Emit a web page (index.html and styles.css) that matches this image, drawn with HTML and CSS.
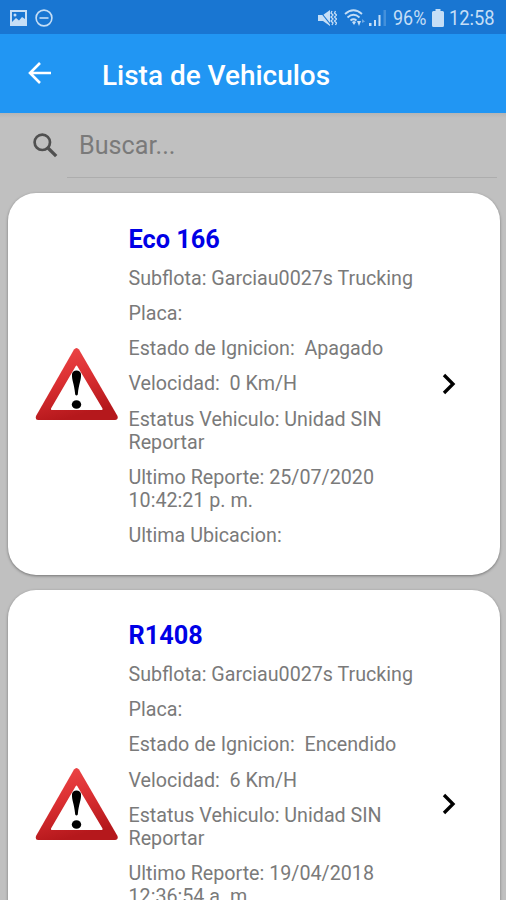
FILE: index.html
```html
<!DOCTYPE html>
<html lang="es">
<head>
<meta charset="utf-8">
<title>Lista de Vehiculos</title>
<link rel="stylesheet" href="styles.css">
</head>
<body>
<svg class="defs" width="0" height="0" aria-hidden="true">
  <defs>
    <linearGradient id="red" x1="0" y1="0" x2="0.3" y2="1">
      <stop offset="0" stop-color="#ef4a4a"/>
      <stop offset="0.5" stop-color="#dc3033"/>
      <stop offset="1" stop-color="#b5181c"/>
    </linearGradient>
    <symbol id="warning" viewBox="0 0 84 74">
      <path d="M39 2.500Q41.500 -0.500 44 2.500L82.500 69Q83.500 73 80 73H3Q0 73 1 69Z" fill="url(#red)"/>
      <path d="M40.500 19.500Q41.500 17.500 42.500 19.500L67.500 61.500Q68 63 66.500 63H17Q15.500 63 16 61.500Z" fill="#fff"/>
      <path d="M37 27Q37.700 23.500 41.500 23.500T46 27C46.300 34 43.800 36 42.800 47.500Q41.500 49.500 40.200 47.500C39.200 36 36.700 34 37 27Z" fill="#000"/>
      <ellipse cx="41.500" cy="57.500" rx="4.700" ry="4.300" fill="#000"/>
    </symbol>
    <symbol id="chevron" viewBox="0 0 14 22">
      <path d="M2 2L11 11L2 20" fill="none" stroke="#000" stroke-width="3.300"/>
    </symbol>
  </defs>
</svg>
<div class="status">
  <svg class="picture" width="17" height="16" viewBox="0 0 17 16"><path fill-rule="evenodd" d="M0 0H17V16H0ZM2 2V12L6 8L9 10.500L12 7L15 9V2Z"/><circle cx="5" cy="5" r="1.500"/></svg>
  <svg class="dnd" width="18" height="18" viewBox="0 0 18 18"><circle cx="9" cy="9" r="7.900" fill="none" stroke="#c5def6" stroke-width="1.600"/><path d="M4.500 8.200H13.500V9.800H4.500Z"/></svg>
  <svg class="mute" width="19" height="18" viewBox="0 0 19 18"><path d="M0 6H5L12 1V17L5 12H0Z"/><path d="M1 1L13 16" stroke="#1976d2" stroke-width="1.200"/><path d="M14 2L13 4L15 6L13 8L15 10L13 12L15 14L14 16M17.500 2L16.500 4L18.500 6L16.500 8L18.500 10L16.500 12L18.500 14L17.500 16" fill="none" stroke="#c5def6" stroke-width="1.300"/></svg>
  <svg class="wifi" width="22" height="18" viewBox="0 0 22 18"><g fill="none" stroke="#c5def6" stroke-width="1.800"><path d="M1 5Q9.500 -2.500 18 5"/><path d="M3.500 8.500Q9.500 3 15.500 8.500"/><path d="M6.500 11.500Q9.500 9 12.500 11.500"/></g><path d="M8 13L10 12L12 13L10 16ZM13 12H17L15 17Z"/><path d="M18 10L21 12.500L18 14Z" opacity=".5"/></svg>
  <svg class="signal" width="18" height="17" viewBox="0 0 18 17"><path d="M0 14H2.500V17H0ZM5 11H7V17H5ZM9.500 6H11.500V17H9.500Z"/><path d="M14.500 1H17V17H14.500Z" opacity=".25"/></svg>
  <span class="percent">96%</span>
  <svg class="battery" width="12" height="18" viewBox="0 0 12 18"><path d="M3.500 0H8.500V2H10.500Q12 2 12 3.500V16.500Q12 18 10.500 18H1.500Q0 18 0 16.500V3.500Q0 2 1.500 2H3.500Z"/></svg>
  <span class="clock">12:58</span>
</div>
<header class="bar">
  <svg class="back" width="24" height="22" viewBox="0 0 24 22"><path d="M12 1L2 11L12 21M2 11H23" fill="none" stroke="#fff" stroke-width="2.600"/></svg>
  <h1 class="heading">Lista de Vehiculos</h1>
</header>
<div class="search">
  <svg class="lens" width="25" height="25" viewBox="0 0 25 25"><circle cx="9.300" cy="9.300" r="7.700" fill="none" stroke="#505050" stroke-width="2.700"/><path d="M14.500 14.500L23.200 23.200" stroke="#505050" stroke-width="3.300"/></svg>
  <div class="field">Buscar...</div>
</div>
<main class="list">
  <article class="card">
    <svg class="warn" width="84" height="74"><use href="#warning"/></svg>
    <div class="info">
      <h2 class="name">Eco 166</h2>
      <p>Subflota: Garciau0027s Trucking</p>
      <p>Placa:</p>
      <p>Estado de Ignicion:&nbsp; Apagado</p>
      <p>Velocidad:&nbsp; 0 Km/H</p>
      <p>Estatus Vehiculo: Unidad SIN<br>Reportar</p>
      <p>Ultimo Reporte: 25/07/2020<br>10:42:21 p. m.</p>
      <p>Ultima Ubicacion:</p>
    </div>
    <svg class="next" width="14" height="22"><use href="#chevron"/></svg>
  </article>
  <article class="card tall">
    <svg class="warn" width="84" height="74"><use href="#warning"/></svg>
    <div class="info">
      <h2 class="name">R1408</h2>
      <p>Subflota: Garciau0027s Trucking</p>
      <p>Placa:</p>
      <p>Estado de Ignicion:&nbsp; Encendido</p>
      <p>Velocidad:&nbsp; 6 Km/H</p>
      <p>Estatus Vehiculo: Unidad SIN<br>Reportar</p>
      <p>Ultimo Reporte: 19/04/2018<br>12:36:54 a. m.</p>
    </div>
    <svg class="next" width="14" height="22"><use href="#chevron"/></svg>
  </article>
</main>
</body>
</html>
```
FILE: styles.css
```css
* { box-sizing: border-box; }
body {
  margin: 0;
  height: 900px;
  overflow: hidden;
  background: #c0c0c0;
  font-family: Roboto, sans-serif;
}
svg { display: block; flex: none; }
h1, h2, p { margin: 0; white-space: nowrap; }
.defs { position: absolute; }
.status {
  display: flex;
  align-items: center;
  height: 34px;
  padding: 1px 0 0 10px;
  background: #1976d2;
  color: #c5def6;
  fill: #c5def6;
  font-size: 19.5px;
  line-height: 34px;
}
.status span { margin-top: 2px; }
.dnd { margin-left: 8px; }
.mute { margin-left: 265px; }
.wifi { margin-left: 7px; }
.signal { margin-left: 3px; }
.percent { width: 33px; margin-left: 6px; transform: scaleX(.92); transform-origin: left; }
.battery { margin-left: 6px; }
.clock { margin-left: 5px; transform: scaleX(.94); transform-origin: left; }
.bar {
  display: flex;
  align-items: center;
  height: 79px;
  padding-left: 28px;
  background: #2196f3;
}
.back { margin-bottom: 1px; }
.heading {
  margin: 4px 0 0 50px;
  color: #fff;
  font-size: 27.950px;
  font-weight: 500;
  line-height: 32px;
}
.search {
  display: flex;
  height: 80.400px;
  padding: 0 9px 0 33px;
  background: linear-gradient(#b5b5b5, #c0c0c0 5px);
}
.lens { margin-top: 20px; }
.field {
  flex: 1;
  height: 65px;
  margin-left: 9px;
  padding-left: 12px;
  border-bottom: 1px solid #adadad;
  color: #7a7a7a;
  font-size: 25.200px;
  line-height: 66px;
}
.list {
  display: flex;
  flex-direction: column;
  gap: 14.400px;
  padding: 0 6.500px 0 7.500px;
}
.card {
  display: flex;
  flex: none;
  height: 381.800px;
  padding: 31.600px 44px 0 27px;
  border-radius: 28px;
  background: #fff;
  box-shadow: 0 1px 3px rgba(0, 0, 0, .4);
}
.card.tall { height: 429px; }
.warn, .next { align-self: center; margin-top: -32px; }
.info {
  display: flex;
  flex: 1;
  flex-direction: column;
  gap: 12px;
  margin-left: 10px;
  color: #7a7a7a;
  font-size: 19.700px;
  line-height: 23.150px;
}
.name {
  color: #0000e6;
  font-size: 25.300px;
  font-weight: 700;
  line-height: 30px;
}
```
